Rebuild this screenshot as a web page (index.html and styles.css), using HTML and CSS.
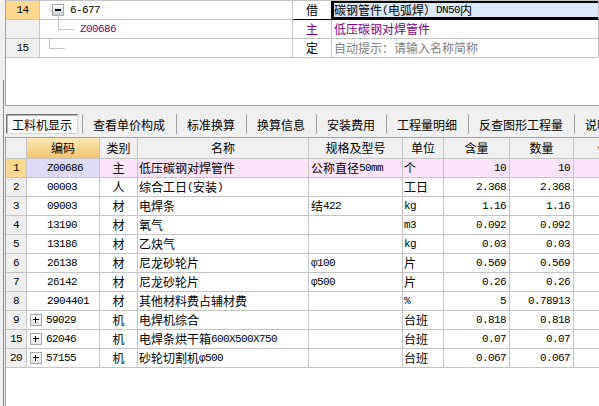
FILE: index.html
```html
<!DOCTYPE html>
<html lang="zh">
<head>
<meta charset="utf-8">
<title>工料机显示</title>
<link rel="stylesheet" href="styles.css">
</head>
<body>
<div class="app">
  <div class="gutter"><div class="splitter"></div></div>
  <div class="main">
    <div class="top-panel">
      <div class="trow">
        <div class="tc rn sel"><span class="a">14</span></div>
        <div class="tc tree"><span class="stub"></span><span class="minus"></span><span class="a">6-677</span></div>
        <div class="tc type act-prev">借</div>
        <div class="tc name active">碳钢管件<span class="a">(</span>电弧焊）<span class="a">DN50</span>内</div>
      </div>
      <div class="trow">
        <div class="tc rn"></div>
        <div class="tc tree sub"><span class="elbow"></span><span class="a purple">Z00686</span></div>
        <div class="tc type purple">主</div>
        <div class="tc name purple">低压碳钢对焊管件</div>
      </div>
      <div class="trow">
        <div class="tc rn"><span class="a">15</span></div>
        <div class="tc tree"><span class="elbow"></span></div>
        <div class="tc type">定</div>
        <div class="tc name hint">自动提示：请输入名称简称</div>
      </div>
    </div>

    <div class="tabs">
      <div class="tab on">工料机显示</div>
      <div class="tab">查看单价构成</div>
      <div class="tab">标准换算</div>
      <div class="tab">换算信息</div>
      <div class="tab">安装费用</div>
      <div class="tab">工程量明细</div>
      <div class="tab">反查图形工程量</div>
      <div class="tab">说明信息</div>
    </div>

    <div class="grid">
      <div class="grow ghead">
        <div class="gc"></div>
        <div class="gc hsel">编码</div>
        <div class="gc">类别</div>
        <div class="gc">名称</div>
        <div class="gc">规格及型号</div>
        <div class="gc">单位</div>
        <div class="gc">含量</div>
        <div class="gc">数量</div>
        <div class="gc">价格</div>
      </div>

      <div class="grow cur">
        <div class="gc rn sel"><span class="a">1</span></div>
        <div class="gc code lav"><span class="a">Z00686</span></div>
        <div class="gc type">主</div>
        <div class="gc name">低压碳钢对焊管件</div>
        <div class="gc spec">公称直径<span class="a">50mm</span></div>
        <div class="gc unit">个</div>
        <div class="gc num"><span class="a">10</span></div>
        <div class="gc num"><span class="a">10</span></div>
        <div class="gc"></div>
      </div>

      <div class="grow">
        <div class="gc rn"><span class="a">2</span></div>
        <div class="gc code"><span class="a">00003</span></div>
        <div class="gc type">人</div>
        <div class="gc name">综合工日<span class="a">(</span>安装<span class="a">)</span></div>
        <div class="gc spec"></div>
        <div class="gc unit">工日</div>
        <div class="gc num"><span class="a">2.368</span></div>
        <div class="gc num"><span class="a">2.368</span></div>
        <div class="gc"></div>
      </div>

      <div class="grow">
        <div class="gc rn"><span class="a">3</span></div>
        <div class="gc code"><span class="a">09003</span></div>
        <div class="gc type">材</div>
        <div class="gc name">电焊条</div>
        <div class="gc spec">结<span class="a">422</span></div>
        <div class="gc unit"><span class="a">kg</span></div>
        <div class="gc num"><span class="a">1.16</span></div>
        <div class="gc num"><span class="a">1.16</span></div>
        <div class="gc"></div>
      </div>

      <div class="grow">
        <div class="gc rn"><span class="a">4</span></div>
        <div class="gc code"><span class="a">13190</span></div>
        <div class="gc type">材</div>
        <div class="gc name">氧气</div>
        <div class="gc spec"></div>
        <div class="gc unit"><span class="a">m3</span></div>
        <div class="gc num"><span class="a">0.092</span></div>
        <div class="gc num"><span class="a">0.092</span></div>
        <div class="gc"></div>
      </div>

      <div class="grow">
        <div class="gc rn"><span class="a">5</span></div>
        <div class="gc code"><span class="a">13186</span></div>
        <div class="gc type">材</div>
        <div class="gc name">乙炔气</div>
        <div class="gc spec"></div>
        <div class="gc unit"><span class="a">kg</span></div>
        <div class="gc num"><span class="a">0.03</span></div>
        <div class="gc num"><span class="a">0.03</span></div>
        <div class="gc"></div>
      </div>

      <div class="grow">
        <div class="gc rn"><span class="a">6</span></div>
        <div class="gc code"><span class="a">26138</span></div>
        <div class="gc type">材</div>
        <div class="gc name">尼龙砂轮片</div>
        <div class="gc spec"><span class="a">φ100</span></div>
        <div class="gc unit">片</div>
        <div class="gc num"><span class="a">0.569</span></div>
        <div class="gc num"><span class="a">0.569</span></div>
        <div class="gc"></div>
      </div>

      <div class="grow">
        <div class="gc rn"><span class="a">7</span></div>
        <div class="gc code"><span class="a">26142</span></div>
        <div class="gc type">材</div>
        <div class="gc name">尼龙砂轮片</div>
        <div class="gc spec"><span class="a">φ500</span></div>
        <div class="gc unit">片</div>
        <div class="gc num"><span class="a">0.26</span></div>
        <div class="gc num"><span class="a">0.26</span></div>
        <div class="gc"></div>
      </div>

      <div class="grow">
        <div class="gc rn"><span class="a">8</span></div>
        <div class="gc code"><span class="a">2904401</span></div>
        <div class="gc type">材</div>
        <div class="gc name">其他材料费占辅材费</div>
        <div class="gc spec"></div>
        <div class="gc unit"><span class="a">%</span></div>
        <div class="gc num"><span class="a">5</span></div>
        <div class="gc num"><span class="a">0.78913</span></div>
        <div class="gc"></div>
      </div>

      <div class="grow">
        <div class="gc rn"><span class="a">9</span></div>
        <div class="gc code exp"><span class="plus"></span><span class="a">59029</span></div>
        <div class="gc type">机</div>
        <div class="gc name">电焊机综合</div>
        <div class="gc spec"></div>
        <div class="gc unit">台班</div>
        <div class="gc num"><span class="a">0.818</span></div>
        <div class="gc num"><span class="a">0.818</span></div>
        <div class="gc"></div>
      </div>

      <div class="grow">
        <div class="gc rn"><span class="a">15</span></div>
        <div class="gc code exp"><span class="plus"></span><span class="a">62046</span></div>
        <div class="gc type">机</div>
        <div class="gc name">电焊条烘干箱<span class="a">600X500X750</span></div>
        <div class="gc spec"></div>
        <div class="gc unit">台班</div>
        <div class="gc num"><span class="a">0.07</span></div>
        <div class="gc num"><span class="a">0.07</span></div>
        <div class="gc"></div>
      </div>

      <div class="grow">
        <div class="gc rn"><span class="a">20</span></div>
        <div class="gc code exp"><span class="plus"></span><span class="a">57155</span></div>
        <div class="gc type">机</div>
        <div class="gc name">砂轮切割机<span class="a">φ500</span></div>
        <div class="gc spec"></div>
        <div class="gc unit">台班</div>
        <div class="gc num"><span class="a">0.067</span></div>
        <div class="gc num"><span class="a">0.067</span></div>
        <div class="gc"></div>
      </div>
    </div>
  </div>
</div>
</body>
</html>
```

FILE: styles.css
```css
* { box-sizing: border-box; }
html, body { margin: 0; padding: 0; }
body {
  width: 599px;
  height: 406px;
  overflow: hidden;
  background: #f0f0f0;
  font-family: "Noto Sans CJK SC", sans-serif;
  font-size: 12px;
  color: #000;
}
.app { display: flex; height: 406px; }
.gutter { width: 5px; flex: none; }
.splitter { margin: 80px 0 0 3px; width: 1px; height: 326px; background: #8c8c8c; }
.main { width: 594px; flex: none; display: flex; flex-direction: column; overflow: hidden; }

.a {
  font-family: "Liberation Mono", monospace;
  font-size: 11px;
  letter-spacing: -0.6px;
}
.purple { color: #800080; }
.hint { color: #808080; }

/* top panel */
.top-panel {
  height: 106px;
  flex: none;
  background: #fff;
  border-top: 1px solid #c4c4c4;
  border-left: 1px solid #a0a0a0;
  border-bottom: 1px solid #a0a0a0;
}
.trow { display: grid; grid-template-columns: 34px 253px 39px 1fr; height: 19px; }
.tc {
  border-right: 1px solid #c4c4c4;
  border-bottom: 1px solid #c4c4c4;
  display: flex;
  align-items: center;
  white-space: nowrap;
  overflow: hidden;
  line-height: 18px;
}
.tc.rn { background: #f0f0f0; justify-content: center; }
.tc.rn.sel { background: #fed88f; }
.tc.type { justify-content: center; }
.tc.act-prev { border-right-color: #000; border-bottom-color: #000; }
.tc.name { padding-left: 2px; }
.tc.name.active {
  background: #dbeafc;
  border-bottom-color: #000;
  box-shadow: inset 2px 0 0 #000, inset 0 2px 0 #000, inset 0 -2px 0 #000;
}
.tc.tree { padding-left: 9px; align-items: center; }
.tc.tree.sub { padding-left: 18px; }
.stub { width: 3px; height: 1px; background: #c4c4c4; flex: none; }
.minus {
  position: relative;
  flex: none;
  width: 12px;
  height: 12px;
  margin-right: 6px;
  border: 1px solid #a8a8a8;
  background: linear-gradient(#fdfdfd, #c9ced6);
}
.minus::before {
  content: "";
  position: absolute;
  left: 2px;
  top: 4px;
  width: 6px;
  height: 2px;
  background: #000;
}
.minus::after {
  content: "";
  position: absolute;
  left: 5px;
  top: 11px;
  width: 1px;
  height: 4px;
  background: #c4c4c4;
}
.elbow {
  align-self: flex-start;
  flex: none;
  width: 16px;
  height: 10px;
  margin-right: 6px;
  border-left: 1px solid #c4c4c4;
  border-bottom: 1px solid #c4c4c4;
}

/* tabs */
.tabs { flex: none; height: 22px; margin-top: 7px; display: flex; align-items: center; }
.tab {
  flex: none;
  height: 20px;
  display: flex;
  align-items: center;
  padding: 0 11px 0 10px;
  border-left: 1px solid #a0a0a0;
  white-space: nowrap;
}
.tab.on {
  width: 72px;
  margin: 0 4px 0 1px;
  padding: 0;
  justify-content: center;
  border: 1px solid;
  border-color: #6e6e6e #d8d8d8 #d8d8d8 #6e6e6e;
  box-shadow: inset 1px 1px 0 #b8b8b8;
  background: #f9f9f9;
}

/* grid */
.grid {
  flex: 1;
  margin-top: 2px;
  background: #fff;
  border-top: 1px solid #a0a0a0;
  border-left: 1px solid #a0a0a0;
}
.grow {
  display: grid;
  grid-template-columns: 21px 73px 38px 171px 94px 41px 66px 64px 72px;
  height: 19px;
}
.grow.ghead { height: 21px; }
.gc {
  border-right: 1px solid #c4c4c4;
  border-bottom: 1px solid #c4c4c4;
  display: flex;
  align-items: center;
  white-space: nowrap;
  overflow: hidden;
  line-height: 18px;
}
.ghead .gc { background: #f0f0f0; justify-content: center; }
.ghead .gc.hsel { background: linear-gradient(#fbe8b8, #f3c46e); }
.gc.rn { background: #f0f0f0; justify-content: center; }
.gc.rn.sel { background: #fed88f; }
.cur .gc { background: #fde3fb; }
.cur .gc.rn.sel { background: #fed88f; }
.cur .gc.lav { background: #dedaf7; }
.gc.code { padding-left: 20px; }
.gc.code.exp { padding-left: 3px; }
.plus {
  position: relative;
  flex: none;
  width: 12px;
  height: 12px;
  margin-right: 4px;
  border: 1px solid #a8a8a8;
  background: linear-gradient(#ffffff, #e2e2e2);
}
.plus::before {
  content: "";
  position: absolute;
  left: 2px;
  top: 4px;
  width: 6px;
  height: 1px;
  background: #000;
}
.plus::after {
  content: "";
  position: absolute;
  left: 4px;
  top: 2px;
  width: 1px;
  height: 6px;
  background: #000;
}
.gc.type { justify-content: center; }
.gc.name { padding-left: 1px; }
.gc.spec { padding-left: 2px; }
.gc.unit { padding-left: 1px; }
.gc.num { justify-content: flex-end; padding-right: 3px; }
```
